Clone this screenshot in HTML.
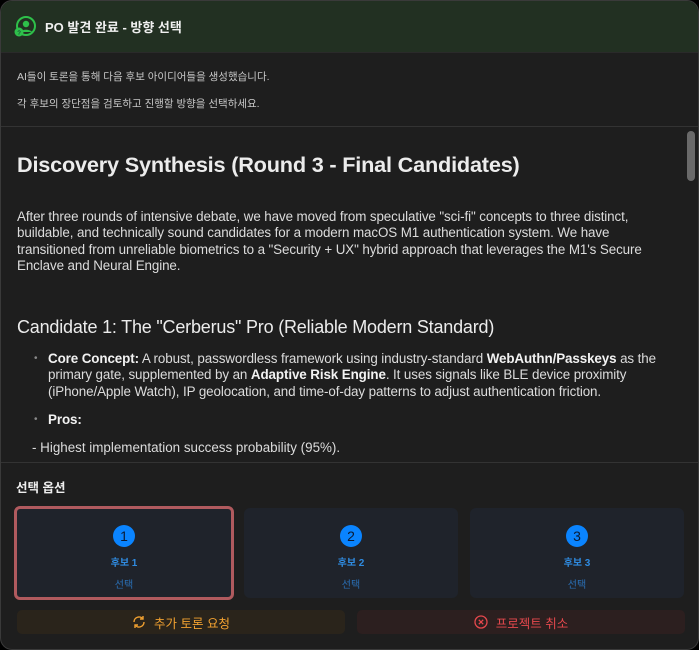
<!DOCTYPE html>
<html><head><meta charset="utf-8"><style>
*{margin:0;padding:0;box-sizing:border-box}
html,body{width:699px;height:650px;background:#000;overflow:hidden}
body{font-family:"Liberation Sans","Noto Sans CJK KR",sans-serif;color:#e6e6e6}
.win{position:absolute;left:0;top:0;width:699px;height:650px;background:#1e1e1e;border-radius:12px;overflow:hidden;border:1px solid #3a3a3a}
.hdr{height:52px;background:#223022;display:flex;align-items:center;padding-left:13px;border-bottom:1px solid #2a2a2a}
.hdr .t{font-size:13px;font-weight:bold;color:#f0f0f0;margin-left:9px}
.intro{height:74px;padding:16px 16px 0;font-size:10.5px;color:#c8c8c8;border-bottom:1px solid #333}
.intro p{margin-bottom:12px}
.content{position:absolute;top:127px;left:0;right:0;height:335px;overflow:hidden;padding:0 16px;border-bottom:1px solid #333}
h1{font-size:21.7px;font-weight:bold;margin-top:24px;color:#ececec;letter-spacing:-0.2px}
.p{font-size:13.4px;line-height:16.3px;margin-top:31px;color:#dcdcdc;letter-spacing:-0.1px;width:650px}
h2{font-size:18px;font-weight:normal;margin-top:43px;color:#ececec;letter-spacing:-0.2px}
ul{list-style:none;margin-top:13px;padding-left:31px;font-size:13.4px;line-height:16.3px;color:#dcdcdc;width:660px}
li{position:relative;margin-bottom:12px;letter-spacing:-0.1px}
li:before{content:"•";position:absolute;left:-14px;color:#888;font-size:10px}
b{color:#f2f2f2}
.dash{font-size:13.4px;margin-left:15px;color:#dcdcdc}
.sb{position:absolute;right:3px;top:130px;width:8px;height:50px;border-radius:4px;background:#6a6a6a}
.bot{position:absolute;top:463px;left:0;right:0;bottom:0;padding:0 15px}
.bot .lbl{font-size:12.5px;font-weight:bold;margin-top:15px;line-height:18px;color:#eee}
.cards{display:flex;margin-top:9px;position:relative;height:94px}
.card{position:absolute;top:2px;height:90px;background:#1f232b;border-radius:6px;display:flex;flex-direction:column;align-items:center;padding-top:17px}
.card.sel{top:0;height:94px;border:3px solid #b05a5e;padding-top:16px}
.num{width:22px;height:22px;border-radius:50%;background:#0a84ff;color:#0b1a33;font-size:14px;display:flex;align-items:center;justify-content:center}
.c1{font-size:10px;color:#2f8be0;margin-top:7px;font-weight:bold}
.c2{font-size:10px;color:#2a6fb5;margin-top:7px}
.btns{position:relative;margin-top:10px;height:24px}
.btn{position:absolute;top:0;height:24px;border-radius:5px;display:flex;align-items:center;justify-content:center;font-size:12.5px}
.b1{left:1px;width:328px;background:#2a241b;color:#f0a030}
.b2{left:341px;width:328px;background:#2c1f1f;color:#e5484d}
</style></head><body>
<div class="win">
<div class="hdr">
<svg width="22" height="22" viewBox="0 0 22 22"><circle cx="12" cy="10" r="9" fill="none" stroke="#2ec04a" stroke-width="2"/><circle cx="12" cy="8" r="3.2" fill="#2ec04a"/><path d="M6 16c2-3 10-3 12 0" fill="#2ec04a"/><circle cx="5" cy="16" r="4.5" fill="#2ec04a"/><text x="5" y="19" font-size="6" text-anchor="middle" fill="#123">?</text></svg>
<span class="t">PO 발견 완료 - 방향 선택</span></div>
<div class="intro"><p>AI들이 토론을 통해 다음 후보 아이디어들을 생성했습니다.</p><p>각 후보의 장단점을 검토하고 진행할 방향을 선택하세요.</p></div>
<div class="content">
<h1>Discovery Synthesis (Round 3 - Final Candidates)</h1>
<div class="p">After three rounds of intensive debate, we have moved from speculative "sci-fi" concepts to three distinct, buildable, and technically sound candidates for a modern macOS M1 authentication system. We have transitioned from unreliable biometrics to a "Security + UX" hybrid approach that leverages the M1's Secure Enclave and Neural Engine.</div>
<h2>Candidate 1: The "Cerberus" Pro (Reliable Modern Standard)</h2>
<ul><li><b>Core Concept:</b> A robust, passwordless framework using industry-standard <b>WebAuthn/Passkeys</b> as the primary gate, supplemented by an <b>Adaptive Risk Engine</b>. It uses signals like BLE device proximity (iPhone/Apple Watch), IP geolocation, and time-of-day patterns to adjust authentication friction.</li>
<li><b>Pros:</b></li></ul>
<div class="dash">- Highest implementation success probability (95%).</div>
</div>
<div class="sb"></div>
<div class="bot">
<div class="lbl">선택 옵션</div>
<div class="cards">
<div class="card sel" style="left:-2px;width:220px"><div class="num">1</div><div class="c1">후보 1</div><div class="c2">선택</div></div>
<div class="card" style="left:228px;width:214px"><div class="num">2</div><div class="c1">후보 2</div><div class="c2">선택</div></div>
<div class="card" style="left:454px;width:214px"><div class="num">3</div><div class="c1">후보 3</div><div class="c2">선택</div></div>
</div>
<div class="btns">
<div class="btn b1"><svg width="14" height="14" viewBox="0 0 14 14" style="margin-right:8px"><path d="M2 7a5 5 0 0 1 9-3M12 7a5 5 0 0 1-9 3" fill="none" stroke="#f0a030" stroke-width="1.4"/><path d="M11 1v3H8M3 13v-3h3" fill="none" stroke="#f0a030" stroke-width="1.4"/></svg>추가 토론 요청</div>
<div class="btn b2"><svg width="14" height="14" viewBox="0 0 14 14" style="margin-right:8px"><circle cx="7" cy="7" r="6" fill="none" stroke="#e5484d" stroke-width="1.3"/><path d="M4.8 4.8l4.4 4.4M9.2 4.8l-4.4 4.4" stroke="#e5484d" stroke-width="1.3"/></svg>프로젝트 취소</div>
</div>
</div>
</div>
</body></html>
